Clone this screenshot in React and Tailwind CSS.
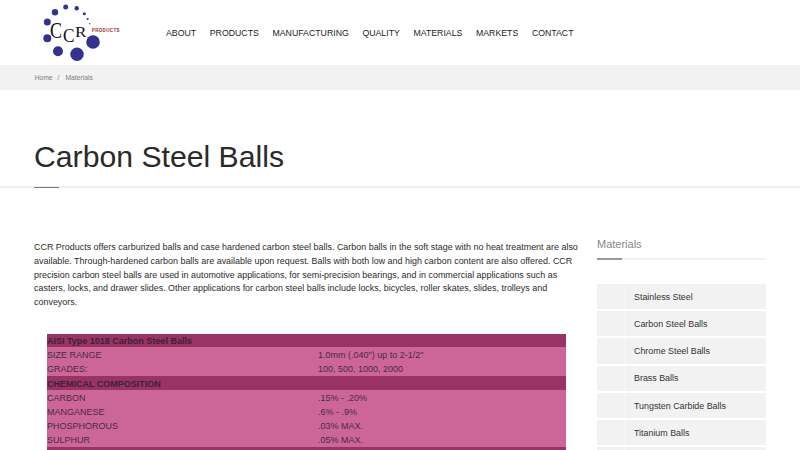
const navItems = ['ABOUT', 'PRODUCTS', 'MANUFACTURING', 'QUALITY', 'MATERIALS', 'MARKETS', 'CONTACT'];

const sideItems = ['Stainless Steel', 'Carbon Steel Balls', 'Chrome Steel Balls', 'Brass Balls', 'Tungsten Carbide Balls', 'Titanium Balls', 'Plastic Balls'];

const rows = [
  { head: 'AISI Type 1018 Carbon Steel Balls' },
  { label: 'SIZE RANGE', value: '1.0mm (.040") up to 2-1/2"' },
  { label: 'GRADES:', value: '100, 500, 1000, 2000' },
  { head: 'CHEMICAL COMPOSITION' },
  { label: 'CARBON', value: '.15% - .20%' },
  { label: 'MANGANESE', value: '.6% - .9%' },
  { label: 'PHOSPHOROUS', value: '.03% MAX.' },
  { label: 'SULPHUR', value: '.05% MAX.' },
  { head: 'PHYSICAL PROPERTIES' },
];

const dots = [
  [31.7, 7, 2.5], [42.7, 8.3, 2.2], [21, 12.3, 3.2], [50.3, 13.7, 1.5], [53.7, 19, 1], [55.7, 23.7, 0.7],
  [13.3, 22, 3.5], [13.3, 38.3, 4], [24, 51.3, 5], [43, 54.3, 6.7], [59, 42, 6.8],
];

const Logo = () => (
  <svg width="90" height="65" viewBox="0 0 90 65" className="block">
    {dots.map(([cx, cy, r]) => (
      <circle key={`${cx}-${cy}`} cx={cx} cy={cy} r={r} fill="#33338f" />
    ))}
    <text x="16" y="37.5" textLength="12" lengthAdjust="spacingAndGlyphs" fontFamily="'Liberation Serif', serif" fontSize="23" fill="#111">C</text>
    <text x="29" y="41.7" textLength="11.5" lengthAdjust="spacingAndGlyphs" fontFamily="'Liberation Serif', serif" fontSize="18" fill="#111">C</text>
    <text x="41" y="37" textLength="11.5" lengthAdjust="spacingAndGlyphs" fontFamily="'Liberation Serif', serif" fontSize="15" fill="#111">R</text>
    <text x="57.8" y="32.3" fontFamily="'Liberation Sans', sans-serif" fontSize="4.5" fontWeight="700" letterSpacing="0.35" fill="#a52a2a">PRODUCTS</text>
  </svg>
);

const App = () => {
  return (
    <div className="h-[450px] w-[800px] overflow-hidden bg-white font-['Liberation_Sans',Arial,sans-serif] text-[#222]">
      {/* Header */}
      <header className="flex h-[65px] items-center pl-[34px]">
        <Logo />
        <nav className="ml-[42px] flex gap-[13.6px] pt-[2px] text-[8.75px]">
          {navItems.map((item) => (
            <span key={item}>{item}</span>
          ))}
        </nav>
      </header>

      {/* Breadcrumb */}
      <div className="flex h-[25px] items-center gap-[5px] bg-[#f2f2f2] pl-[34.5px] pt-[1px] text-[6.75px] text-[#808080]">
        <span>Home</span>
        <span>/</span>
        <span className="ml-[1px]">Materials</span>
      </div>

      {/* Title */}
      <div className="relative h-[98px] border-b-2 border-[#f0f0f0] pl-[34px] pt-[47px]">
        <h1 className="text-[30.2px] leading-[40px] text-[#2a2a2a]">Carbon Steel Balls</h1>
        <div className="absolute bottom-[-2px] left-[34px] h-[1.5px] w-[25px] bg-[#777]" />
      </div>

      <div className="flex pl-[34px] pt-[50px]">
        {/* Main column */}
        <main className="w-[546px] pt-[3px]">
          <p className="w-[545px] text-[8.95px] leading-[13.8px] text-[#2b2b2b]">
            CCR Products offers carburized balls and case hardened carbon steel balls. Carbon balls in the soft stage with no heat treatment are also available. Through-hardened carbon balls are available upon request. Balls with both low and high carbon content are also offered. CCR precision carbon steel balls are used in automotive applications, for semi-precision bearings, and in commercial applications such as casters, locks, and drawer slides. Other applications for carbon steel balls include locks, bicycles, roller skates, slides, trolleys and conveyors.
          </p>
          <table className="ml-[13px] mt-[24px] w-[518.5px] table-fixed border-collapse bg-[#cc6699] text-[9px] leading-[14px] text-[#4a2a3d]">
            <colgroup>
              <col className="w-[271px]" />
              <col />
            </colgroup>
            <tbody>
              {rows.map((row) =>
                row.head ? (
                  <tr key={row.head} className="h-[14px]">
                    <td colSpan={2} className="border-b border-[#cc6699] bg-[#993366] p-0 pt-[1px] font-bold leading-[12px] text-[#3a2430]">
                      {row.head}
                    </td>
                  </tr>
                ) : (
                  <tr key={row.label} className="h-[14px]">
                    <td className="p-0">{row.label}</td>
                    <td className="p-0">{row.value}</td>
                  </tr>
                )
              )}
            </tbody>
          </table>
        </main>

        {/* Sidebar */}
        <aside className="ml-[17px] w-[168.5px]">
          <h3 className="text-[11px] leading-[13px] text-[#888]">Materials</h3>
          <div className="relative mt-[7px] h-[2px] bg-[#f2f2f2]">
            <div className="absolute left-0 top-0 h-[2px] w-[25px] bg-[#999]" />
          </div>
          <ul className="mt-[24px] flex flex-col gap-[2px]">
            {sideItems.map((item) => (
              <li key={item} className="flex h-[25.2px] items-center bg-[#f2f2f2] text-[8.9px] text-[#333]">
                <span className="flex h-full w-[28px] shrink-0 border-r border-[#f6f6f6]" />
                <span className="pl-[9px] pt-[2px]">{item}</span>
              </li>
            ))}
          </ul>
        </aside>
      </div>
    </div>
  );
};

export default App;
